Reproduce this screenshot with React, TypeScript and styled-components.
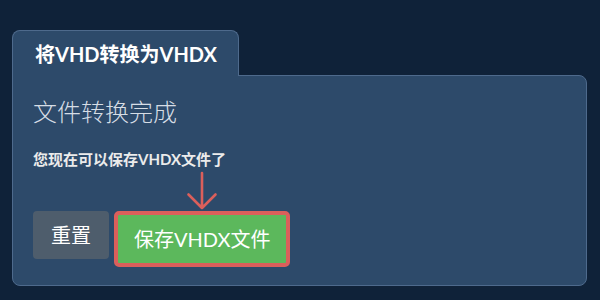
import React from "react";
import styled, { createGlobalStyle } from "styled-components";

const Global = createGlobalStyle`
  html, body { margin: 0; padding: 0; }
  body {
    background: #0f2239;
    font-family: Lato, "Noto Sans CJK SC", sans-serif;
    color: #ebebeb;
  }
`;

const Page = styled.div`
  width: 600px;
  height: 300px;
  box-sizing: border-box;
  padding: 30px 13px 0 12px;
`;

const Tab = styled.div`
  position: relative;
  z-index: 1;
  width: 227px;
  height: 46px;
  box-sizing: border-box;
  margin-bottom: -1px;
  padding: 0 0 0 22px;
  display: flex;
  align-items: center;
  background: #2d4a6a;
  border: 1px solid #4e6a8c;
  border-bottom: none;
  border-radius: 8px 8px 0 0;
  font-size: 20px;
  font-weight: 700;
  color: #ffffff;
`;

const Panel = styled.div`
  height: 211px;
  box-sizing: border-box;
  background: #2d4a6a;
  border: 1px solid #4e6a8c;
  border-radius: 0 8px 8px 8px;
  padding: 20px 20px 0 20px;
  display: flex;
  flex-direction: column;
`;

const Heading = styled.div`
  font-size: 24px;
  font-weight: 300;
  line-height: 32px;
  color: #d6dde5;
`;

const Message = styled.div`
  margin-top: 20px;
  font-size: 15px;
  font-weight: 700;
  line-height: 22px;
  color: #ebebeb;
`;

const Actions = styled.div`
  margin-top: 41px;
  display: flex;
  align-items: flex-start;
  gap: 5px;
`;

const Button = styled.button<{ $variant: "default" | "success" }>`
  position: relative;
  height: ${(p) => (p.$variant === "success" ? "56px" : "48px")};
  box-sizing: border-box;
  padding: 0 ${(p) => (p.$variant === "success" ? "16px" : "18px")};
  font-family: Lato, "Noto Sans CJK SC", sans-serif;
  font-size: 20px;
  line-height: 1;
  color: #ffffff;
  background: ${(p) => (p.$variant === "success" ? "#5cb85c" : "#4e5d6c")};
  border: ${(p) => (p.$variant === "success" ? "4px solid #db5f5b" : "none")};
  border-radius: ${(p) => (p.$variant === "success" ? "5px" : "4px")};
  cursor: pointer;
`;

const Arrow = styled.svg`
  position: absolute;
  left: 50%;
  bottom: 100%;
  margin-left: -15px;
  margin-bottom: 5px;
  width: 30px;
  height: 40px;
  overflow: visible;
`;

export default function App() {
  return (
    <>
      <Global />
      <Page>
        <Tab>将VHD转换为VHDX</Tab>
        <Panel>
          <Heading>文件转换完成</Heading>
          <Message>您现在可以保存VHDX文件了</Message>
          <Actions>
            <Button $variant="default">重置</Button>
            <Button $variant="success">
              <Arrow viewBox="0 0 30 40">
                <path
                  d="M15 3 V38 M1.5 24.5 L15 38 L28.5 24.5"
                  fill="none"
                  stroke="#db5f5b"
                  strokeWidth="2.6"
                  strokeLinecap="round"
                  strokeLinejoin="round"
                />
              </Arrow>
              保存VHDX文件
            </Button>
          </Actions>
        </Panel>
      </Page>
    </>
  );
}
